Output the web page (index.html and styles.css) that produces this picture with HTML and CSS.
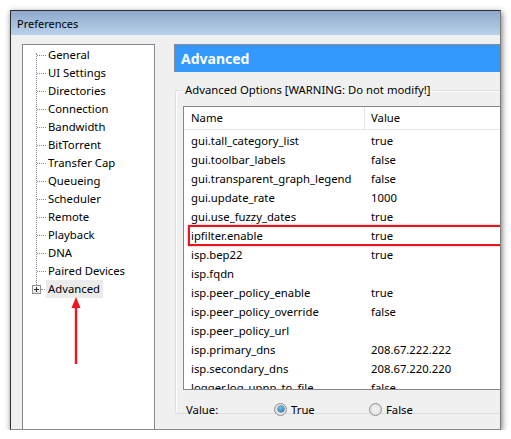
FILE: index.html
```html
<!DOCTYPE html>
<html>
<head>
<meta charset="utf-8">
<link rel="stylesheet" href="styles.css">
</head>
<body>
<div class="window">
  <div class="titlebar">Preferences</div>
  <div class="content">
    <div class="tree">
      <div class="vline"></div>
      <ul class="items">
        <li>General</li>
        <li>UI Settings</li>
        <li>Directories</li>
        <li>Connection</li>
        <li>Bandwidth</li>
        <li>BitTorrent</li>
        <li>Transfer Cap</li>
        <li>Queueing</li>
        <li>Scheduler</li>
        <li>Remote</li>
        <li>Playback</li>
        <li>DNA</li>
        <li>Paired Devices</li>
        <li class="sel"><span class="plus"></span><span class="label">Advanced</span></li>
      </ul>
      <svg class="arrow" width="14" height="70" viewBox="0 0 14 70">
        <polygon points="7,0 2.5,11 11.5,11" fill="#f0141e"/>
        <rect x="5.8" y="9" width="2.4" height="58" fill="#f0141e"/>
      </svg>
    </div>
    <div class="right">
      <div class="header">Advanced</div>
      <fieldset class="group">
        <legend>Advanced Options [WARNING: Do not modify!]</legend>
        <div class="list">
          <div class="lhead">
            <div class="c1">Name</div>
            <div class="c2">Value</div>
          </div>
          <div class="rows">
            <div class="row"><div class="c1">gui.tall_category_list</div><div class="c2">true</div></div>
            <div class="row"><div class="c1">gui.toolbar_labels</div><div class="c2">false</div></div>
            <div class="row"><div class="c1">gui.transparent_graph_legend</div><div class="c2">false</div></div>
            <div class="row"><div class="c1">gui.update_rate</div><div class="c2">1000</div></div>
            <div class="row"><div class="c1">gui.use_fuzzy_dates</div><div class="c2">true</div></div>
            <div class="row hl"><div class="c1">ipfilter.enable</div><div class="c2">true</div></div>
            <div class="row"><div class="c1">isp.bep22</div><div class="c2">true</div></div>
            <div class="row"><div class="c1">isp.fqdn</div><div class="c2"></div></div>
            <div class="row"><div class="c1">isp.peer_policy_enable</div><div class="c2">true</div></div>
            <div class="row"><div class="c1">isp.peer_policy_override</div><div class="c2">false</div></div>
            <div class="row"><div class="c1">isp.peer_policy_url</div><div class="c2"></div></div>
            <div class="row"><div class="c1">isp.primary_dns</div><div class="c2">208.67.222.222</div></div>
            <div class="row"><div class="c1">isp.secondary_dns</div><div class="c2">208.67.220.220</div></div>
            <div class="row"><div class="c1">logger.log_upnp_to_file</div><div class="c2">false</div></div>
          </div>
        </div>
        <div class="valuerow">
          <span class="vlabel">Value:</span>
          <span class="opt opt-true"><span class="radio checked"></span>True</span>
          <span class="opt"><span class="radio"></span>False</span>
        </div>
      </fieldset>
    </div>
  </div>
</div>
</body>
</html>
```

FILE: styles.css
```css
html, body {
  margin: 0;
  padding: 0;
  background: #ffffff;
}
body {
  font-family: "Noto Sans", "Open Sans", sans-serif;
  font-size: 11.3px;
  color: #000;
  padding: 10px 0 0 10px;
}
.window {
  width: 489px;
  height: 418px;
  border: 1px solid #2f2f2f;
  border-right-color: #7a7a7a;
  border-bottom-color: #8a8a8a;
  background: #f0f0f0;
  overflow: hidden;
  box-shadow: 1px 2px 6px rgba(0,0,0,0.55);
}
.titlebar {
  height: 24px;
  line-height: 25px;
  padding-left: 6px;
  font-size: 11px;
  background: linear-gradient(#8eaacb, #b9d1ea);
  color: #000;
}
.content {
  display: flex;
  padding-top: 9px;
}
.tree {
  position: relative;
  flex: none;
  margin-left: 11px;
  width: 131px;
  height: 400px;
  border: 1px solid #828790;
  background: #fff;
}
.vline {
  position: absolute;
  left: 13px;
  top: 8px;
  height: 232px;
  border-left: 1px dotted #8a8a8a;
}
.items {
  list-style: none;
  margin: 0;
  padding: 1px 0 0 0;
}
.items li {
  position: relative;
  height: 18px;
  line-height: 18px;
  padding-left: 25px;
  white-space: nowrap;
}
.items li::before {
  content: "";
  position: absolute;
  left: 14px;
  top: 9px;
  width: 9px;
  border-top: 1px dotted #8a8a8a;
}
.items li.sel {
  padding-left: 23px;
}
.items li.sel::before {
  left: 18px;
  width: 4px;
}
.sel .label {
  display: inline-block;
  background: #ebebeb;
  padding: 0 3px 0 2px;
  height: 18px;
}
.plus {
  position: absolute;
  left: 9px;
  top: 5px;
  width: 7px;
  height: 7px;
  border: 1px solid #919191;
  background: linear-gradient(#ffffff, #e4e4e4);
}
.plus::before {
  content: "";
  position: absolute;
  left: 1px;
  top: 3px;
  width: 5px;
  height: 1px;
  background: #2c2c2c;
}
.plus::after {
  content: "";
  position: absolute;
  left: 3px;
  top: 1px;
  width: 1px;
  height: 5px;
  background: #2c2c2c;
}
.arrow {
  position: absolute;
  left: 46px;
  top: 252px;
}
.right {
  flex: none;
  width: 340px;
  margin-left: 19px;
}
.header {
  height: 27px;
  line-height: 27px;
  border-top: 1px solid #8c8c8c;
  border-left: 1px solid #8c8c8c;
  background: #3399ff;
  color: #fff;
  font-weight: bold;
  font-size: 14px;
  padding-left: 6px;
}
.group {
  margin: 10px 0 0 1px;
  padding: 0 0 0 7px;
  border: 1px solid #d5dfe5;
  border-radius: 3px;
  height: 330px;
  box-shadow: inset 1px 1px 0 #fff;
}
.group legend {
  padding: 0 2px;
  margin-left: 0;
  line-height: 16px;
}
.list {
  margin-top: 8px;
  width: 330px;
  height: 282px;
  border: 1px solid #828790;
  background: #fff;
  overflow: hidden;
}
.lhead {
  display: flex;
  height: 22px;
  line-height: 22px;
  border-bottom: 1px solid #e5e5e5;
}
.lhead .c1 {
  border-right: 1px solid #e5e5e5;
}
.c1 {
  width: 173px;
  padding-left: 7px;
  flex: none;
  white-space: nowrap;
}
.c2 {
  padding-left: 6px;
  white-space: nowrap;
}
.row .c2 {
  padding-left: 7px;
}
.rows {
  padding-top: 1px;
}
.row {
  display: flex;
  height: 19px;
  line-height: 19px;
  position: relative;
}
.row.hl::after {
  content: "";
  position: absolute;
  left: 4px;
  right: 0;
  top: -1px;
  bottom: -1px;
  border: 2px solid #e8161c;
  box-shadow: 0 0 2px rgba(232,22,28,0.45);
}
.valuerow {
  display: flex;
  align-items: center;
  margin-top: 11px;
  height: 16px;
  padding-left: 3px;
}
.vlabel {
  width: 88px;
}
.opt {
  display: flex;
  align-items: center;
  gap: 4px;
}
.opt-true {
  width: 95px;
}
.radio {
  position: relative;
  width: 11px;
  height: 11px;
  border: 1px solid #8f8f8f;
  border-radius: 50%;
  background: radial-gradient(circle at 50% 50%, #f4f4f4, #d9d9d9);
  flex: none;
}
.radio.checked::after {
  content: "";
  position: absolute;
  left: 2.5px;
  top: 2.5px;
  width: 6px;
  height: 6px;
  border-radius: 50%;
  background: radial-gradient(circle at 40% 35%, #6ec4f4, #1a6ea8);
  box-shadow: 0 0 0 0.5px #1d4f73;
}
```
